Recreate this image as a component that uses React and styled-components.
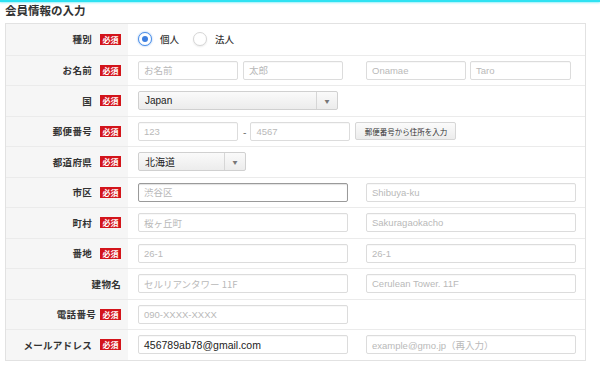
import React from "react";
import styled, { createGlobalStyle } from "styled-components";

const Global = createGlobalStyle`
  html, body { margin: 0; padding: 0; background: #fff; }
  body { font-family: "Noto Sans CJK JP", "Liberation Sans", sans-serif; color: #333; }
  * { box-sizing: border-box; }
`;

const Page = styled.div`
  width: 600px;
  height: 374px;
  overflow: hidden;
  position: relative;
`;

const TopBar = styled.div`
  height: 2px;
  background: #2fe2f2;
  box-shadow: 0 1px 2px rgba(47, 226, 242, 0.5);
`;

const Title = styled.h2`
  margin: 0;
  padding: 1px 5px 0;
  font-size: 11.5px;
  line-height: 14px;
  font-weight: 700;
  color: #333;
`;

const Table = styled.div`
  margin: 6px 0 0 5px;
  width: 581px;
  border: 1px solid #e2e2e2;
  display: flex;
  flex-direction: column;
`;

const Row = styled.div`
  display: flex;
  height: 30.5px;
  border-top: ${(p) => (p.$first ? "none" : "1px solid #ebebeb")};
`;

const LabelCell = styled.div`
  width: 122px;
  flex: none;
  background: #f6f6f6;
  display: flex;
  align-items: center;
  justify-content: flex-end;
  padding-right: 7px;
  font-size: 9.5px;
  font-weight: 700;
  color: #333;
  letter-spacing: 0.3px;
`;

const Badge = styled.span`
  display: inline-block;
  margin-left: ${(p) => p.$gap || 8}px;
  background: #d3141b;
  color: #fff;
  font-size: 8px;
  font-weight: 700;
  line-height: 11px;
  padding: 0 2.5px;
  letter-spacing: 0;
`;

const ContentCell = styled.div`
  flex: 1;
  display: flex;
  align-items: center;
  padding-left: 10px;
`;

const Input = styled.div`
  width: ${(p) => p.$w}px;
  height: 19px;
  flex: none;
  border: 1px solid ${(p) => (p.$focus ? "#9a9a9a" : "#dcdcdc")};
  border-radius: 2px;
  box-shadow: ${(p) => (p.$focus ? "inset 0 1px 1px rgba(0,0,0,0.12)" : "inset 0 1px 1px rgba(0,0,0,0.03)")};
  margin-left: ${(p) => p.$ml || 0}px;
  padding-left: 5px;
  display: flex;
  align-items: center;
  font-family: ${(p) => (p.$latin ? '"Liberation Sans", "Noto Sans CJK JP", sans-serif' : '"Noto Sans CJK JP", "Liberation Sans", sans-serif')};
  font-size: ${(p) => (p.$value ? "10.5px" : "9.5px")};
  color: ${(p) => (p.$value ? "#222" : "#b9b9b9")};
  white-space: nowrap;
  overflow: hidden;
`;

const Select = styled.div`
  width: ${(p) => p.$w}px;
  height: 19px;
  flex: none;
  display: flex;
  border: 1px solid #d0d0d0;
  border-radius: 2px;
  background: linear-gradient(#fafafa, #ececec);
  font-size: 10px;
  color: #222;
`;

const SelectText = styled.div`
  flex: 1;
  display: flex;
  align-items: center;
  padding-left: 6px;
  font-family: ${(p) => (p.$latin ? '"Liberation Sans", sans-serif' : '"Noto Sans CJK JP", sans-serif')};
`;

const SelectArrow = styled.div`
  width: 21px;
  border-left: 1px solid #d6d6d6;
  display: flex;
  align-items: center;
  justify-content: center;
  font-size: 5px;
  color: #777;
`;

const RadioWrap = styled.label`
  display: flex;
  align-items: center;
  gap: 8px;
  font-size: 9.5px;
  font-weight: 500;
  color: #333;
  margin-right: 14px;
`;

const RadioCircle = styled.span`
  width: 14px;
  height: 14px;
  border-radius: 50%;
  background: #fff;
  border: 1px solid ${(p) => (p.$on ? "#4a8ee8" : "#d6d6d6")};
  box-shadow: ${(p) => (p.$on ? "0 0 2px rgba(74,142,232,0.7)" : "0 1px 2px rgba(0,0,0,0.08)")};
  display: flex;
  align-items: center;
  justify-content: center;
  &::after {
    content: "";
    width: 6px;
    height: 6px;
    border-radius: 50%;
    background: ${(p) => (p.$on ? "#3d7fe0" : "transparent")};
  }
`;

const Dash = styled.span`
  margin: 0 4px 0 5px;
  font-size: 10px;
  color: #555;
`;

const Button = styled.div`
  margin-left: 5px;
  width: 101px;
  height: 18px;
  border: 1px solid #d6d6d6;
  border-radius: 2px;
  background: linear-gradient(#fbfbfb, #ececec);
  display: flex;
  align-items: center;
  justify-content: center;
  font-size: 7.5px;
  color: #333;
`;

function Label({ text, req = true, gap }) {
  return (
    <LabelCell>
      {text}
      {req && <Badge $gap={gap}>必須</Badge>}
    </LabelCell>
  );
}

function Pair({ left, right, focus, latinLeft }) {
  return (
    <ContentCell>
      <Input $w={210} $focus={focus} $latin={latinLeft}>{left}</Input>
      {right !== undefined && (
        <Input $w={210} $ml={18} $latin>
          {right}
        </Input>
      )}
    </ContentCell>
  );
}

export default function App() {
  return (
    <Page>
      <Global />
      <TopBar />
      <Title>会員情報の入力</Title>
      <Table>
        <Row $first>
          <Label text="種別" />
          <ContentCell>
            <RadioWrap>
              <RadioCircle $on />
              個人
            </RadioWrap>
            <RadioWrap>
              <RadioCircle />
              法人
            </RadioWrap>
          </ContentCell>
        </Row>
        <Row>
          <Label text="お名前" />
          <ContentCell>
            <Input $w={100}>お名前</Input>
            <Input $w={100} $ml={5}>太郎</Input>
            <Input $w={100} $ml={23} $latin>Onamae</Input>
            <Input $w={101} $ml={4} $latin>Taro</Input>
          </ContentCell>
        </Row>
        <Row>
          <Label text="国" />
          <ContentCell>
            <Select $w={200}>
              <SelectText $latin>Japan</SelectText>
              <SelectArrow>▼</SelectArrow>
            </Select>
          </ContentCell>
        </Row>
        <Row>
          <Label text="郵便番号" />
          <ContentCell>
            <Input $w={100} $latin>123</Input>
            <Dash>-</Dash>
            <Input $w={100} $latin>4567</Input>
            <Button>郵便番号から住所を入力</Button>
          </ContentCell>
        </Row>
        <Row>
          <Label text="都道府県" />
          <ContentCell>
            <Select $w={108}>
              <SelectText>北海道</SelectText>
              <SelectArrow>▼</SelectArrow>
            </Select>
          </ContentCell>
        </Row>
        <Row>
          <Label text="市区" />
          <Pair left="渋谷区" right="Shibuya-ku" focus />
        </Row>
        <Row>
          <Label text="町村" />
          <Pair left="桜ヶ丘町" right="Sakuragaokacho" />
        </Row>
        <Row>
          <Label text="番地" />
          <Pair left="26-1" right="26-1" latinLeft />
        </Row>
        <Row>
          <Label text="建物名" req={false} />
          <Pair left="セルリアンタワー 11F" right="Cerulean Tower. 11F" />
        </Row>
        <Row>
          <Label text="電話番号" gap={4} />
          <Pair left="090-XXXX-XXXX" latinLeft />
        </Row>
        <Row>
          <Label text="メールアドレス" />
          <ContentCell>
            <Input $w={210} $latin $value>456789ab78@gmail.com</Input>
            <Input $w={210} $ml={18} $latin>example@gmo.jp（再入力）</Input>
          </ContentCell>
        </Row>
      </Table>
    </Page>
  );
}
